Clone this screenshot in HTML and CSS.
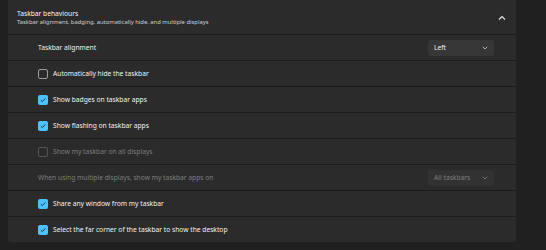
FILE: index.html
```html
<!DOCTYPE html>
<html lang="en">
<head>
    <meta charset="UTF-8">
    <title>Taskbar behaviours</title>
    <link rel="stylesheet" href="styles.css">
</head>
<body>

    <div class="panel">
        <div class="panel-header">
            <div class="header-text">
                <h1>Taskbar behaviours</h1>
                <p>Taskbar alignment, badging, automatically hide, and multiple displays</p>
            </div>
            <svg class="collapse-icon" width="8" height="6" viewBox="0 0 8 6">
                <path d="M1 4.5 L4 1.5 L7 4.5" fill="none" stroke="#e8e8e8" stroke-width="1.1"/>
            </svg>
        </div>

        <div class="setting-row">
            <span>Taskbar alignment</span>
            <div class="dropdown">
                <span>Left</span>
                <svg width="6" height="4" viewBox="0 0 6 4"><path d="M0.8 0.8 L3 3 L5.2 0.8" fill="none" stroke="#bdbdbd" stroke-width="0.9"/></svg>
            </div>
        </div>

        <div class="setting-row">
            <label class="check-item"><span class="checkbox"></span>Automatically hide the taskbar</label>
        </div>

        <div class="setting-row">
            <label class="check-item"><span class="checkbox checked"><svg width="10" height="10" viewBox="0 0 10 10"><path d="M2.8 5.2 L4.3 6.6 L7.3 3.4" fill="none" stroke="#1b2a33" stroke-width="0.9"/></svg></span>Show badges on taskbar apps</label>
        </div>

        <div class="setting-row">
            <label class="check-item"><span class="checkbox checked"><svg width="10" height="10" viewBox="0 0 10 10"><path d="M2.8 5.2 L4.3 6.6 L7.3 3.4" fill="none" stroke="#1b2a33" stroke-width="0.9"/></svg></span>Show flashing on taskbar apps</label>
        </div>

        <div class="setting-row disabled">
            <label class="check-item"><span class="checkbox"></span>Show my taskbar on all displays</label>
        </div>

        <div class="setting-row disabled">
            <span>When using multiple displays, show my taskbar apps on</span>
            <div class="dropdown">
                <span>All taskbars</span>
                <svg width="6" height="4" viewBox="0 0 6 4"><path d="M0.8 0.8 L3 3 L5.2 0.8" fill="none" stroke="#7a7a7a" stroke-width="0.9"/></svg>
            </div>
        </div>

        <div class="setting-row">
            <label class="check-item"><span class="checkbox checked"><svg width="10" height="10" viewBox="0 0 10 10"><path d="M2.8 5.2 L4.3 6.6 L7.3 3.4" fill="none" stroke="#1b2a33" stroke-width="0.9"/></svg></span>Share any window from my taskbar</label>
        </div>

        <div class="setting-row">
            <label class="check-item"><span class="checkbox checked"><svg width="10" height="10" viewBox="0 0 10 10"><path d="M2.8 5.2 L4.3 6.6 L7.3 3.4" fill="none" stroke="#1b2a33" stroke-width="0.9"/></svg></span>Select the far corner of the taskbar to show the desktop</label>
        </div>
    </div>

</body>
</html>
```

FILE: styles.css
```css
body {
    font-family: "Noto Sans", "Open Sans", Arial, sans-serif;
    margin: 0;
    padding: 0;
    background-color: #202020;
    color: #f2f2f2;
    font-size: 6.7px;
}

.panel {
    width: 508px;
    margin-left: 8px;
    display: flex;
    flex-direction: column;
    gap: 1px;
    background-color: #1c1c1c;
    border-radius: 0 0 3px 3px;
    overflow: hidden;
}

.panel-header {
    height: 34px;
    display: flex;
    justify-content: space-between;
    align-items: center;
    padding: 0 10px 0 9px;
    background-color: #2b2b2b;
}

.header-text h1 {
    margin: 0;
    font-size: 6.7px;
    font-weight: 400;
    line-height: 9px;
    color: #f5f5f5;
}

.header-text p {
    margin: 0;
    font-size: 5.85px;
    line-height: 8px;
    color: #cfcfcf;
}

.collapse-icon {
    margin-top: 1px;
}

.setting-row {
    height: 25px;
    display: flex;
    justify-content: space-between;
    align-items: center;
    padding: 0 22px 0 30px;
    background-color: #2b2b2b;
}

.check-item {
    display: flex;
    align-items: center;
    gap: 5px;
}

.checkbox {
    width: 8px;
    height: 8px;
    border: 1px solid #9c9c9c;
    border-radius: 2px;
    display: flex;
    align-items: center;
    justify-content: center;
}

.checkbox.checked {
    width: 10px;
    height: 10px;
    border: none;
    background-color: #4cc2ff;
}

.dropdown {
    width: 54px;
    height: 16px;
    padding: 0 6px;
    display: flex;
    justify-content: space-between;
    align-items: center;
    background-color: #373737;
    border-radius: 3px;
}

.disabled {
    color: #7d7d7d;
}

.disabled .checkbox {
    border-color: #555555;
}

.disabled .dropdown {
    background-color: #323232;
}
```
